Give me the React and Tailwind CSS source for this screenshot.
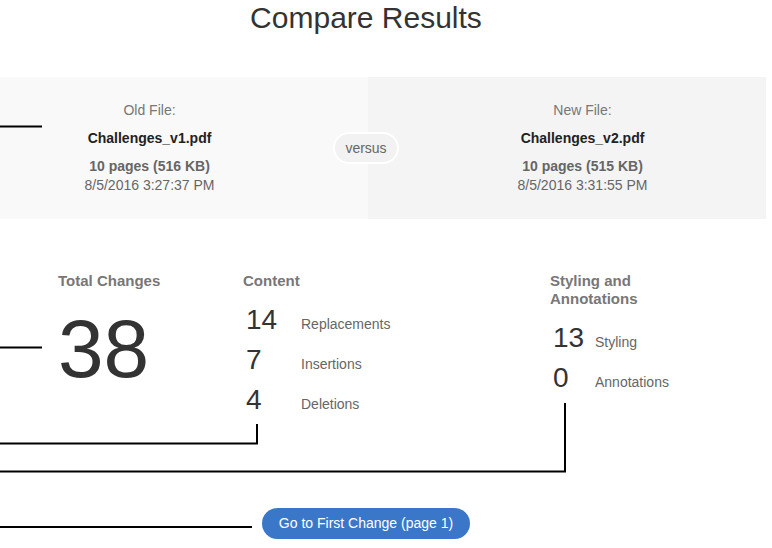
import React from "react";

function StatRow({ num, label, numW }) {
  return (
    <div className="flex items-baseline h-[40px] leading-[40px]">
      <span className={`${numW} pl-[3px] text-[28px] text-[#333]`}>{num}</span>
      <span className="text-[14px] text-[#666]">{label}</span>
    </div>
  );
}

export default function App() {
  return (
    <div className="relative w-[772px] h-[548px] bg-white overflow-hidden font-['Liberation_Sans',Arial,sans-serif]">
      <h1 className="w-[732px] pt-[1px] text-center text-[30px] leading-[34px] text-[#333]">
        Compare Results
      </h1>

      <div className="relative mt-[42px] flex h-[142px]">
        <div className="w-[368px] bg-[#f9f9f9]">
          <div className="w-[299px] pt-[23px] text-center text-[14px]">
            <div className="leading-[20px] text-[#777]">Old File:</div>
            <div className="mt-[8px] leading-[20px] font-bold text-[#222]">Challenges_v1.pdf</div>
            <div className="mt-[9px] leading-[19px] text-[#666]">
              <div className="font-bold">10 pages (516 KB)</div>
              <div>8/5/2016 3:27:37 PM</div>
            </div>
          </div>
        </div>
        <div className="w-[398px] bg-[#f4f4f4] pl-[31px]">
          <div className="pt-[23px] text-center text-[14px]">
            <div className="leading-[20px] text-[#777]">New File:</div>
            <div className="mt-[8px] leading-[20px] font-bold text-[#222]">Challenges_v2.pdf</div>
            <div className="mt-[9px] leading-[19px] text-[#666]">
              <div className="font-bold">10 pages (515 KB)</div>
              <div>8/5/2016 3:31:55 PM</div>
            </div>
          </div>
        </div>
        <div className="absolute left-[333px] top-[55px] flex h-[32px] w-[66px] items-center justify-center rounded-full border-2 border-white bg-[#f2f2f2] text-[14px] text-[#666]">
          versus
        </div>
      </div>

      <div className="flex pl-[58px] pt-[53px]">
        <div className="w-[185px]">
          <div className="text-[15px] leading-[18px] font-bold text-[#777]">Total Changes</div>
          <div className="mt-[18px] text-[82px] leading-none text-[#333]">38</div>
        </div>
        <div className="w-[307px]">
          <div className="text-[15px] leading-[18px] font-bold text-[#777]">Content</div>
          <div className="mt-[10px]">
            <StatRow num="14" label="Replacements" numW="w-[58px]" />
            <StatRow num="7" label="Insertions" numW="w-[58px]" />
            <StatRow num="4" label="Deletions" numW="w-[58px]" />
          </div>
        </div>
        <div>
          <div className="text-[15px] leading-[18px] font-bold text-[#777]">
            Styling and
            <br />
            Annotations
          </div>
          <div className="mt-[10px]">
            <StatRow num="13" label="Styling" numW="w-[45px]" />
            <StatRow num="0" label="Annotations" numW="w-[45px]" />
          </div>
        </div>
      </div>

      <div className="flex w-[732px] justify-center pt-[88px]">
        <button className="h-[31px] w-[208px] rounded-full bg-[#3a77c8] text-[14px] text-white">
          Go to First Change (page 1)
        </button>
      </div>

      <svg
        className="pointer-events-none absolute left-0 top-0"
        width="772"
        height="548"
        viewBox="0 0 772 548"
        fill="none"
        stroke="#000"
        strokeWidth="2"
      >
        <path d="M0 126.5H42" />
        <path d="M0 347.5H42" />
        <path d="M0 443.5H257V424" />
        <path d="M0 471.5H565V403" />
        <path d="M0 527H252" />
      </svg>
    </div>
  );
}
